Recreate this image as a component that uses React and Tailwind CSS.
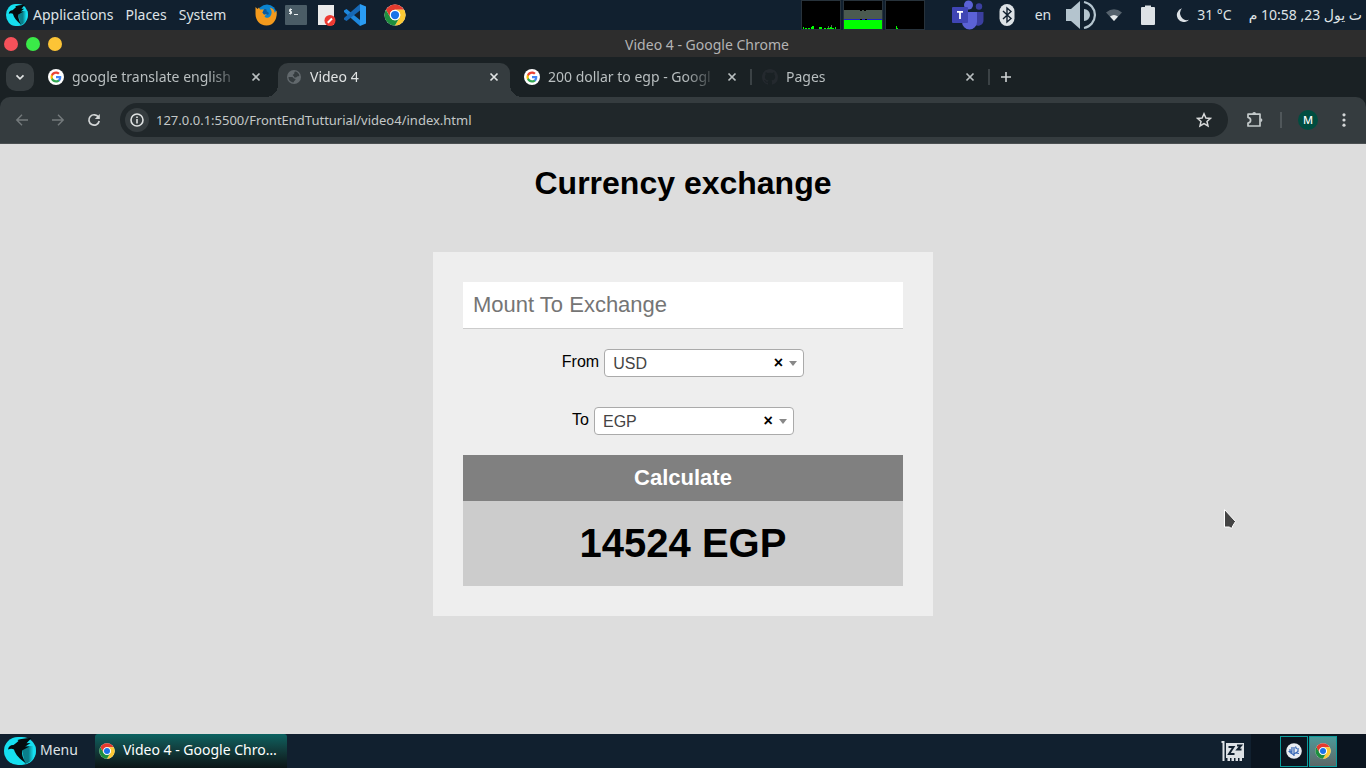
import { useState } from "react";

function ParrotLogo({ className }) {
  return (
    <svg viewBox="0 0 32 28" preserveAspectRatio="none" className={className} aria-hidden="true">
      <defs>
        <linearGradient id="parrotShade" x1="0" x2="1">
          <stop offset="0.5" stopColor="#0a7f8a" />
          <stop offset="0.85" stopColor="#16dff0" />
        </linearGradient>
      </defs>
      <rect width="32" height="28" rx="14" fill="#16dff0" />
      <path d="M17 9 H31 A14 14 0 0 1 21 27 Z" fill="url(#parrotShade)" />
      <path
        d="M27.5 1 C22 0.8 17 2 13.5 3 L14.5 4 L11.5 6.5 L9.5 8 C6.5 7.8 4.5 9.5 4 12.5 C6.5 11.2 8.5 11.5 10 12.5 C11.5 18 16 22 21.5 26 C19 21 17.5 17.5 18 13.5 L25.5 9.5 L21 9.8 L26.5 6 L22.5 6.2 Z"
        fill="#050b0d"
      />
    </svg>
  );
}

function ChromeLogo({ className }) {
  return (
    <svg viewBox="0 0 48 48" className={className} aria-hidden="true">
      <circle cx="24" cy="24" r="23" fill="#fff" />
      <path d="M4.1 12.5 A23 23 0 0 1 43.9 12.5 L24 12.5 A11.5 11.5 0 0 0 14 18.2 L14 29.7 Z" fill="#e33b2e" />
      <path d="M43.9 12.5 A23 23 0 0 1 24 47 L34 29.7 A11.5 11.5 0 0 0 34 18.2 L24 12.5 Z" fill="#fcc934" />
      <path d="M4.1 12.5 A23 23 0 0 0 24 47 L34 29.7 A11.5 11.5 0 0 1 14 29.7 Z" fill="#1e8e3e" />
      <circle cx="24" cy="24" r="11.5" fill="#fff" />
      <circle cx="24" cy="24" r="9" fill="#1a73e8" />
    </svg>
  );
}

function GoogleIcon() {
  return (
    <svg viewBox="0 0 32 32" className="size-4 shrink-0" aria-hidden="true">
      <circle cx="16" cy="16" r="16" fill="#fff" />
      <g transform="translate(4 4)">
        <path fill="#4285f4" d="M22.56 12.25c0-.78-.07-1.53-.2-2.25H12v4.26h5.92c-.26 1.37-1.04 2.53-2.21 3.31v2.77h3.57c2.08-1.92 3.28-4.74 3.28-8.09z" />
        <path fill="#34a853" d="M12 23c2.97 0 5.46-.98 7.28-2.66l-3.57-2.77c-.98.66-2.23 1.06-3.71 1.06-2.86 0-5.29-1.93-6.16-4.53H2.18v2.84C3.99 20.53 7.7 23 12 23z" />
        <path fill="#fbbc05" d="M5.84 14.09c-.22-.66-.35-1.36-.35-2.09s.13-1.43.35-2.09V7.07H2.18C1.43 8.55 1 10.22 1 12s.43 3.45 1.18 4.93l3.66-2.84z" />
        <path fill="#ea4335" d="M12 5.38c1.62 0 3.06.56 4.21 1.64l3.15-3.15C17.45 2.09 14.97 1 12 1 7.7 1 3.99 3.47 2.18 7.07l3.66 2.84c.87-2.6 3.3-4.53 6.16-4.53z" />
      </g>
    </svg>
  );
}

function GlobeIcon() {
  return (
    <svg viewBox="0 0 16 16" className="size-4 shrink-0" aria-hidden="true">
      <circle cx="8" cy="8" r="7" fill="#62696d" />
      <path d="M9 2.6 C11 2.8 13 4.2 13.4 6.6 C12.6 8 11.4 6.9 10.4 8.2 C9.2 9 7.6 8.4 7.9 7 C6.6 6.6 6.4 5.4 7.8 5.2 C8.8 4.8 7.8 3.4 9 2.6 Z M2.5 8 L6 8 C7.4 8.2 7.3 9.6 8.9 9.8 C10.6 10.4 8.6 11.6 7.4 13.4 C4.4 13.2 2.4 10.8 2.5 8 Z" fill="#353c3f" />
    </svg>
  );
}

function GithubIcon() {
  return (
    <svg viewBox="0 0 16 16" className="size-4 shrink-0" aria-hidden="true">
      <path fill="#24292e" d="M8 0C3.58 0 0 3.58 0 8c0 3.54 2.29 6.53 5.47 7.59.4.07.55-.17.55-.38 0-.19-.01-.82-.01-1.49-2.01.37-2.53-.49-2.69-.94-.09-.23-.48-.94-.82-1.13-.28-.15-.68-.52-.01-.53.63-.01 1.08.58 1.23.82.72 1.21 1.87.87 2.33.66.07-.52.28-.87.51-1.07-1.78-.2-3.64-.89-3.64-3.95 0-.87.31-1.59.82-2.15-.08-.2-.36-1.02.08-2.12 0 0 .67-.21 2.2.82.64-.18 1.32-.27 2-.27s1.36.09 2 .27c1.53-1.04 2.2-.82 2.2-.82.44 1.1.16 1.92.08 2.12.51.56.82 1.27.82 2.15 0 3.07-1.87 3.75-3.65 3.95.29.25.54.73.54 1.48 0 1.07-.01 1.93-.01 2.2 0 .21.15.46.55.38A8.01 8.01 0 0 0 16 8c0-4.42-3.58-8-8-8z" />
    </svg>
  );
}

function FirefoxIcon() {
  return (
    <svg viewBox="0 0 22 22" className="size-[22px]" aria-hidden="true">
      <circle cx="12" cy="10" r="9.5" fill="#0a84d0" />
      <path d="M0.5 3 L2.5 5 L4 3.5 L5 5.5 L9 5.5 L7.5 8.5 L9 10.5 L11.5 10 L9.5 12.5 C11 14.5 14 14 15.5 12 C17.5 9 16.5 5.5 14.5 3.5 C18 4 20 7 19.5 9 L21.5 6.5 C22.5 13 20 21.5 11.5 21.5 C4.5 21.5 0.5 16 0.5 10 Z" fill="#f39a1d" />
      <path d="M9 5.5 C11 4.5 12 5.5 11.5 7 L14 9 L13 11 L11.5 10 L9 10.5 L7.5 8.5 Z" fill="#0c5a9c" />
    </svg>
  );
}

function TerminalIcon() {
  return (
    <svg viewBox="0 0 22 20" className="h-5 w-[22px]" aria-hidden="true">
      <rect width="22" height="20" rx="1" fill="#4a5c66" />
      <path d="M7 4.5 H4.5 V6.5 H6.5 V8.5 H4 M5.5 3.5 V9.5 M9 9.5 H13" stroke="#e8eef0" fill="none" />
    </svg>
  );
}

function EditorIcon() {
  return (
    <svg viewBox="0 0 19 22" className="h-[22px] w-[19px]" aria-hidden="true">
      <rect x="1" y="1" width="16" height="20" fill="#ebebeb" />
      <circle cx="13" cy="16.5" r="5.5" fill="#ee3a32" />
      <path d="M10.8 18.7 L15 14.5" stroke="#fff" strokeWidth="2" />
    </svg>
  );
}

function CodeIcon() {
  return (
    <svg viewBox="0 0 22 22" className="size-[22px]" aria-hidden="true">
      <path d="M16 22 V16 L2.5 5 L0 6.5 V8 Z" fill="#1e88dd" />
      <path d="M16 0 V6.5 L2.5 17 L0 15.5 V14 Z" fill="#1668b5" />
      <path d="M16 0 L22 2.5 V19.5 L16 22 Z" fill="#2a9cf3" />
    </svg>
  );
}

function CpuGraph() {
  return (
    <svg viewBox="0 0 40 30" className="h-[30px] w-10" aria-hidden="true">
      <rect x="0.5" y="0.5" width="39" height="29" fill="#000" stroke="#27323b" />
      <path d="M2 27h1v2h-1z M4 28h2v1h-2z M7 28h2v1h-2z M10 27h3v2h-3z M11 26h2v1h-2z M18 27h3v2h-3z M23 28h2v1h-2z M26 28h7v1h-7z M29 27h2v1h-2z M34 27h1v2h-1z" fill="#00ff00" />
      <path d="M27 26h1v2h-1z M30 25h1v2h-1z" fill="#536055" />
    </svg>
  );
}

function MemoryGraph() {
  return (
    <svg viewBox="0 0 40 30" className="h-[30px] w-10" aria-hidden="true">
      <rect x="0.5" y="0.5" width="39" height="29" fill="#000" stroke="#27323b" />
      <path d="M1 10H17V11H19V10H21V11H23V10H39V19H1Z" fill="#4b5a50" />
      <path d="M1 19h16v1h2v-1h3v1h2v-1h15v1h-38z" fill="#2020c8" />
      <rect x="1" y="20" width="38" height="9" fill="#00ff00" />
    </svg>
  );
}

function NetworkGraph() {
  return (
    <svg viewBox="0 0 40 30" className="h-[30px] w-10" aria-hidden="true">
      <rect x="0.5" y="0.5" width="39" height="29" fill="#000" stroke="#27323b" />
      <path d="M11 26h1v3h-1z M12 28h1v1h-1z" fill="#00ff00" />
    </svg>
  );
}

function TeamsIcon() {
  return (
    <svg viewBox="0 0 32 30" className="h-[30px] w-8" aria-hidden="true">
      <circle cx="27" cy="6.5" r="3.2" fill="#3b3fa0" />
      <path d="M21 12 H31.5 V20 A5.5 5.5 0 0 1 22 24 Z" fill="#3b3fa0" />
      <circle cx="16.5" cy="5" r="4.5" fill="#5b62d6" />
      <path d="M10 12 H25 V22 A7.5 7.5 0 0 1 10 22 Z" fill="#5b62d6" />
      <rect x="0" y="7" width="16" height="16" rx="1" fill="#3f45b4" />
      <path d="M5 11.8 H11 M8 11.8 V19" stroke="#fff" strokeWidth="1.8" />
    </svg>
  );
}

function BluetoothIcon() {
  return (
    <svg viewBox="0 0 16 22" className="h-[22px] w-4" aria-hidden="true">
      <rect x="0.5" width="15" height="22" rx="7.5" fill="#dde2e6" />
      <path d="M4 7 L12 14.5 L8 18 V4 L12 7.5 L4 15" stroke="#11202f" strokeWidth="1.4" fill="none" />
    </svg>
  );
}

function VolumeIcon() {
  return (
    <svg viewBox="0 0 30 30" className="size-[30px]" aria-hidden="true">
      <path d="M0 9 H5 L14 1 V29 L5 21 H0 Z M18 9 A6 6 0 0 1 18 21 Z" fill="#b4c4ce" />
      <path d="M18 2 A13.2 13.2 0 0 1 18 28" stroke="#b4c4ce" strokeWidth="2.2" fill="none" />
    </svg>
  );
}

function WifiIcon() {
  return (
    <svg viewBox="0 0 16 12" className="h-3 w-4" aria-hidden="true">
      <path d="M0 3.5 Q8 -3 16 3.5 L8 12 Z" fill="#56626d" />
      <path d="M4 7.5 Q8 4.5 12 7.5 L8 12 Z" fill="#e4e8ea" />
    </svg>
  );
}

function BatteryIcon() {
  return (
    <svg viewBox="0 0 14 20" className="h-5 w-3.5" aria-hidden="true">
      <path d="M4 0.5 H10 V2 H13 Q14 2 14 3 V19 Q14 20 13 20 H1 Q0 20 0 19 V3 Q0 2 1 2 H4 Z" fill="#dde2e6" />
    </svg>
  );
}

function MoonIcon() {
  return (
    <svg viewBox="0 0 14 14" className="size-3.5" aria-hidden="true">
      <path d="M6 0.3 A7 7 0 1 0 13 11.8 A7 7 0 0 1 6 0.3 Z" fill="#dde2e6" />
    </svg>
  );
}

function TopPanel() {
  return (
    <header className="flex h-[30px] items-center bg-[#11202f] text-[14px] leading-[30px] whitespace-nowrap text-[#dfe3e6]">
      <nav className="flex items-center gap-3 pl-[6px]">
        <button className="flex items-center gap-[5px]">
          <ParrotLogo className="h-[22px] w-[22px]" />
          Applications
        </button>
        <button>Places</button>
        <button>System</button>
      </nav>
      <div className="ml-[29px] flex items-center gap-2">
        <button aria-label="Firefox"><FirefoxIcon /></button>
        <button aria-label="Terminal"><TerminalIcon /></button>
        <button aria-label="Text editor" className="pl-0.5"><EditorIcon /></button>
        <button aria-label="Code editor"><CodeIcon /></button>
        <button aria-label="Chrome" className="pl-[10px]"><ChromeLogo className="size-[22px]" /></button>
      </div>
      <div className="ml-auto flex items-center gap-0.5">
        <CpuGraph />
        <MemoryGraph />
        <NetworkGraph />
      </div>
      <div className="ml-[27px] flex items-center pr-1">
        <TeamsIcon />
        <span className="ml-[15px]"><BluetoothIcon /></span>
        <span className="ml-5">en</span>
        <span className="ml-[15px]"><VolumeIcon /></span>
        <span className="ml-[10px]"><WifiIcon /></span>
        <span className="ml-[19px]"><BatteryIcon /></span>
        <span className="ml-[21px]"><MoonIcon /></span>
        <span className="ml-[7px]">31 °C</span>
        <time dir="rtl" className="ml-[17px]">ث يول 23, 10:58 م</time>
      </div>
    </header>
  );
}

function TitleBar() {
  return (
    <div className="flex h-[27px] items-center bg-[#2d2d2d] pl-1">
      <div className="flex gap-2">
        <button aria-label="Close window" className="size-3.5 rounded-full bg-[#f5515a]" />
        <button aria-label="Maximize window" className="size-3.5 rounded-full bg-[#3aea48]" />
        <button aria-label="Minimize window" className="size-3.5 rounded-full bg-[#fcc436]" />
      </div>
      <span className="flex-1 pt-0.5 pr-[14px] text-center text-[14px] leading-5 text-[#b4b4b4]">Video 4 - Google Chrome</span>
    </div>
  );
}

function CloseGlyph() {
  return (
    <svg viewBox="0 0 16 16" className="size-4" aria-hidden="true">
      <path d="M4.5 4.5 L11.5 11.5 M11.5 4.5 L4.5 11.5" stroke="currentColor" strokeWidth="1.7" />
    </svg>
  );
}

function Tab({ icon, title, active, divider }) {
  return (
    <div className="flex w-[238px] min-w-0 items-start">
      <div className={active ? "relative flex h-10 w-[232px] items-start" : "flex h-10 w-[232px] items-start"}>
        {active && (
          <>
            <span className="absolute bottom-0 -left-3 size-3 bg-[radial-gradient(circle_at_0_0,transparent_12px,#353c3f_12px)]" />
            <span className="absolute -right-3 bottom-0 size-3 bg-[radial-gradient(circle_at_100%_0,transparent_12px,#353c3f_12px)]" />
          </>
        )}
        <div
          className={
            active
              ? "mt-[6px] flex h-[34px] w-full items-center rounded-t-[10px] bg-[#353c3f] px-2 pb-[6px] text-[#e0e3e3]"
              : "mt-[6px] flex h-[34px] w-full items-center px-2 pb-[6px] text-[#b9bfc0]"
          }
        >
          {icon}
          <a
            href="#tab"
            className="ml-2 min-w-0 flex-1 overflow-hidden text-[14px] leading-5 whitespace-nowrap [mask-image:linear-gradient(to_right,#000_136px,transparent_170px)]"
          >
            {title}
          </a>
          <button aria-label={"Close " + title} className="ml-3">
            <CloseGlyph />
          </button>
        </div>
      </div>
      {divider && <span className="mt-3 ml-0.5 h-4 w-0.5 bg-[#3b4245]" />}
    </div>
  );
}

function TabStrip() {
  return (
    <div className="flex h-10 bg-[#1a2124] pl-[6px]">
      <button aria-label="Search tabs" className="mt-[6px] mr-[6px] flex size-7 items-center justify-center rounded-[10px] bg-[#353c3f]">
        <svg viewBox="0 0 10 10" className="size-[10px]" aria-hidden="true">
          <path d="M1.5 3.3 L5 6.8 L8.5 3.3" stroke="#e0e3e3" strokeWidth="1.7" fill="none" />
        </svg>
      </button>
      <Tab icon={<GoogleIcon />} title="google translate english" />
      <Tab icon={<GlobeIcon />} title="Video 4" active />
      <Tab icon={<GoogleIcon />} title="200 dollar to egp - Googl" divider />
      <Tab icon={<GithubIcon />} title="Pages" divider />
      <button aria-label="New tab" className="mt-[6px] flex size-7 items-center justify-center">
        <svg viewBox="0 0 10 10" className="size-[10px]" aria-hidden="true">
          <path d="M5 0 V10 M0 5 H10" stroke="#cfd3d4" strokeWidth="1.6" />
        </svg>
      </button>
    </div>
  );
}

function Toolbar() {
  return (
    <div className="bg-[#1a2124]">
      <div className="flex h-[47px] items-center rounded-t-[10px] border-b border-[#4a4f51] bg-[#353c3f] pr-[14px] pl-[14px]">
        <div className="flex gap-5">
          <button aria-label="Back">
            <svg viewBox="0 0 16 16" className="size-4" aria-hidden="true">
              <path d="M14 8 H3 M8 2.8 L2.8 8 L8 13.2" stroke="#747a7c" strokeWidth="1.4" fill="none" />
            </svg>
          </button>
          <button aria-label="Forward">
            <svg viewBox="0 0 16 16" className="size-4" aria-hidden="true">
              <path d="M2 8 H13 M8 2.8 L13.2 8 L8 13.2" stroke="#747a7c" strokeWidth="1.4" fill="none" />
            </svg>
          </button>
          <button aria-label="Reload">
            <svg viewBox="0 0 16 16" className="size-4" aria-hidden="true">
              <path d="M12.5 5.2 A5.2 5.2 0 1 0 13.2 9" stroke="#d3d6d7" strokeWidth="1.7" fill="none" />
              <path d="M13.8 2 V7 H8.8 Z" fill="#d3d6d7" />
            </svg>
          </button>
        </div>
        <div className="ml-[18px] flex h-[34px] min-w-0 flex-1 items-center rounded-full bg-[#20272a] pr-4 pl-[5px]">
          <button aria-label="Site information" className="flex size-6 items-center justify-center rounded-full bg-[#353c3f]">
            <svg viewBox="0 0 16 16" className="size-4" aria-hidden="true">
              <circle cx="8" cy="8" r="6" stroke="#dfe2e2" strokeWidth="1.6" fill="none" />
              <path d="M8 7 V11.5 M8 4.5 V6" stroke="#dfe2e2" strokeWidth="1.6" />
            </svg>
          </button>
          <input
            aria-label="Address"
            defaultValue="127.0.0.1:5500/FrontEndTutturial/video4/index.html"
            className="ml-[7px] min-w-0 flex-1 bg-transparent text-[13px] leading-5 text-[#c3c7c7] outline-none"
          />
          <button aria-label="Bookmark this tab">
            <svg viewBox="0 0 16 16" className="size-4" aria-hidden="true">
              <path d="M8 1.8 L9.9 6 L14.4 6.4 L11 9.4 L12 13.9 L8 11.5 L4 13.9 L5 9.4 L1.6 6.4 L6.1 6 Z" stroke="#d8dada" strokeWidth="1.5" fill="none" />
            </svg>
          </button>
        </div>
        <button aria-label="Extensions" className="ml-[18px]">
          <svg viewBox="0 0 18 18" className="size-[18px]" aria-hidden="true">
            <path d="M2 3.2 H14 V15 H2 V12 Q4.6 11.6 4.6 9.2 Q4.6 6.8 2 6.4 Z" stroke="#c4cacb" strokeWidth="1.7" strokeLinejoin="round" fill="none" />
            <path d="M6.3 3 A1.9 1.9 0 0 1 10.1 3 Z M14.5 7.2 A1.9 1.9 0 0 1 14.5 11 Z" fill="#c4cacb" />
          </svg>
        </button>
        <span className="ml-4 h-4 w-0.5 bg-[#50575a]" />
        <button aria-label="Profile" className="ml-4 size-5 rounded-full bg-[#004d40] text-[11px] leading-5 font-medium text-white">
          M
        </button>
        <button aria-label="Chrome menu" className="ml-[18px]">
          <svg viewBox="0 0 16 16" className="size-4" aria-hidden="true">
            <g fill="#d3d6d7">
              <circle cx="8" cy="2.8" r="1.6" />
              <circle cx="8" cy="8" r="1.6" />
              <circle cx="8" cy="13.2" r="1.6" />
            </g>
          </svg>
        </button>
      </div>
    </div>
  );
}

function CurrencySelect({ id, label, value, onChange }) {
  return (
    <div className="flex items-start justify-center gap-[5px]">
      <label htmlFor={id} className="text-[16px] leading-[26px]">{label}</label>
      <span className="relative w-[200px]">
        <select
          id={id}
          value={value}
          onChange={(event) => onChange(event.target.value)}
          className="block h-7 w-full appearance-none rounded-[4px] border border-[#aaa] bg-white px-2 pt-0.5 text-[16px] leading-6 text-[#444]"
        >
          <option value="" />
          <option>USD</option>
          <option>EGP</option>
        </select>
        <button
          type="button"
          aria-label={"Clear " + label}
          onClick={() => onChange("")}
          className="absolute top-0 right-[21px] text-[16px] leading-[27px] font-bold text-black"
        >
          ×
        </button>
        <span className="pointer-events-none absolute top-3 right-[7px] border-x-4 border-t-5 border-x-transparent border-t-[#888]" />
      </span>
    </div>
  );
}

function ExchangePage() {
  const [from, setFrom] = useState("USD");
  const [to, setTo] = useState("EGP");
  return (
    <main className="flex-1 bg-[#ddd] px-4 pt-[21px] pb-8 font-['Liberation_Sans',Arial,sans-serif] text-black">
      <h1 className="text-center text-[32px] leading-[37px] font-bold">Currency exchange</h1>
      <form
        onSubmit={(event) => event.preventDefault()}
        className="mx-auto mt-[50px] max-w-[500px] bg-[#eee] p-[30px]"
      >
        <input
          type="text"
          aria-label="Mount To Exchange"
          placeholder="Mount To Exchange"
          className="block h-[47px] w-full border-b border-[#ccc] bg-white p-[10px] text-[22px] leading-[26px] outline-none placeholder:text-[#757575]"
        />
        <div className="flex flex-col gap-[30px] py-5">
          <CurrencySelect id="from" label="From" value={from} onChange={setFrom} />
          <CurrencySelect id="to" label="To" value={to} onChange={setTo} />
        </div>
        <button type="submit" className="block w-full bg-[#808080] p-[10px] text-[22px] leading-[26px] font-bold text-white">
          Calculate
        </button>
        <output htmlFor="from to" className="block bg-[#ccc] py-5 text-center text-[40px] leading-[45px] font-bold">
          14524 EGP
        </output>
      </form>
    </main>
  );
}

function Taskbar() {
  return (
    <footer className="flex h-[34px] items-stretch bg-[#11202f] text-[14px] leading-[18px] whitespace-nowrap text-[#dfe3e6]">
      <button className="flex items-center gap-1 pl-1">
        <ParrotLogo className="h-7 w-8" />
        <span className="pb-0.5">Menu</span>
      </button>
      <button className="ml-[17px] flex w-[192px] items-center gap-2 rounded-t-[3px] bg-linear-to-b from-[#0a6361] to-[#0b1517] pl-1 text-white">
        <ChromeLogo className="size-4" />
        <span className="pb-0.5">Video 4 - Google Chro…</span>
      </button>
      <div className="ml-auto flex items-center pr-[6px]">
        <svg viewBox="0 0 24 22" className="h-[22px] w-6" aria-hidden="true">
          <path d="M0.5 1 H3.5 V21 H1.5 V3 H0.5 Z M5 3 H23 V18 H21 V21 H18.5 V18 H17 V21 H14.5 V18 H13 V21 H10.5 V18 H9 V21 H6.5 V18 H5 Z" fill="#dde2e6" />
          <path d="M7.5 7 H12.5 L8 14 H13.5 M16 5.5 H20 L16.5 9.5 H20.5" stroke="#11202f" strokeWidth="2" fill="none" />
        </svg>
      </div>
      <div className="flex w-[115px] items-center bg-[#0b1520] pl-[29px]">
        <button aria-label="Workspace 1" className="flex h-[31px] w-7 items-center justify-center border border-[#0c9c9c]">
          <svg viewBox="0 0 16 16" className="size-4" aria-hidden="true">
            <circle cx="8" cy="8" r="7.8" fill="#e9edf2" />
            <path d="M8 13 V4 M8 12 L4 9.5 V6 M8 11 L12 8.5 V5 M5.5 8 L2.5 8.5 M10.5 6 L9.5 3.5 M5.8 10.5 L6 4 M10 10 L13 10.5" stroke="#3465b4" strokeWidth="1.2" fill="none" />
          </svg>
        </button>
        <button aria-label="Workspace 2" className="ml-px flex h-[31px] w-7 items-center justify-center border border-[#0c9c9c] bg-linear-to-b from-[#4a9a9a] to-[#5c6666]">
          <ChromeLogo className="size-4" />
        </button>
      </div>
    </footer>
  );
}

export default function App() {
  return (
    <div className="flex min-h-screen flex-col font-['Noto_Sans','DejaVu_Sans',sans-serif]">
      <TopPanel />
      <TitleBar />
      <TabStrip />
      <Toolbar />
      <ExchangePage />
      <Taskbar />
      <svg viewBox="0 0 14 22" className="pointer-events-none fixed top-[508px] left-[1223px] h-[22px] w-3.5" aria-hidden="true">
        <path d="M1.5 1.5 V19 H6.2 L8.5 20.5 L10 17.5 L12.5 13.5 Z" fill="#444" stroke="#fff" />
      </svg>
    </div>
  );
}
